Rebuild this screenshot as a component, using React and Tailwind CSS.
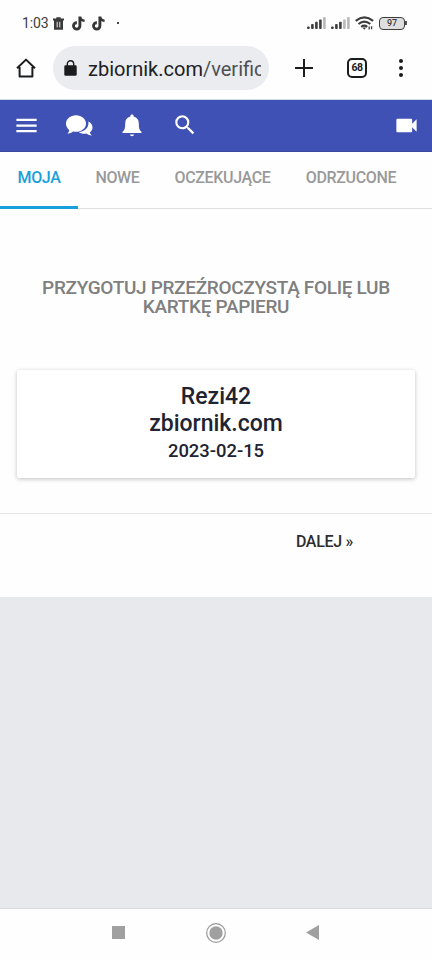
import React from "react"
import { MdMenu, MdSearch, MdVideocam } from "react-icons/md"

const tabs = [
  { label: "MOJA", active: true, box: "w-[78px]" },
  { label: "NOWE", active: false, box: "w-[79px]" },
  { label: "OCZEKUJĄCE", active: false, box: "w-[131px]" },
  { label: "ODRZUCONE", active: false, box: "w-[126px]" },
]

const TrashIcon = () => (
  <svg viewBox="0 0 11 13" className="w-[11px] h-[13px]" fill="#3b3b3b">
    <path d="M0 1.5h3.3V.3h4.4v1.2H11v1.9H0zM1 3.2h9v9.5H1z" />
    <path d="M4.200 4.800v5.600M6.800 4.800v5.600" stroke="#fff" strokeWidth="0.900" />
  </svg>
)

const NoteIcon = () => (
  <svg viewBox="0 0 13 15" className="w-[13px] h-[15px]" fill="none" stroke="#363636">
    <path d="M7.900.6v9A3.200 3.200 0 1 1 4.900 6.700" strokeWidth="2.900" />
    <path d="M8 1.100c.3 2.400 2 3.500 4.600 3.600" strokeWidth="2.600" />
  </svg>
)

const Signal = ({ bars }) => (
  <svg viewBox="0 0 19 12" className="w-[19px] h-[12px]">
    {[2.6, 5, 7.3, 9.5, 12].map((h, i) => (
      <rect key={h} x={i * 4 + 0.1} y={12 - h} width="2.6" height={h} rx="0.8" fill={i < bars ? "#3d3d3d" : "#b8b8b8"} />
    ))}
  </svg>
)

const WifiIcon = () => (
  <svg viewBox="0 0 19 14" className="w-[19px] h-[14px]" fill="none" stroke="#3d3d3d" strokeWidth="2.200">
    <path d="M.7 4.800q8.700-6.800 17.400 0M3.500 8q5.900-4.700 11.800 0M6.200 10.800q3.200-2.400 6 0" />
    <path d="M7.400 11.400h3.800l-1.900 2.400z" fill="#3d3d3d" stroke="none" />
    <path d="M14.200 10.600v3M16.600 10.300v3" strokeWidth="1.300" />
  </svg>
)

const StatusBar = () => (
  <div className="h-[46px] flex items-center pl-[22px] pr-[25px] text-[#3b3b3b]">
    <span className="w-[31px] text-[14px] tracking-[-0.1px]">1:03</span>
    <TrashIcon />
    <div className="flex gap-[7px] ml-[8px]">
      <NoteIcon />
      <NoteIcon />
    </div>
    <span className="size-[2px] ml-[12px] bg-[#444]" />
    <div className="ml-auto flex items-center">
      <Signal bars={4} />
      <div className="ml-[5px]">
        <Signal bars={3} />
      </div>
      <div className="ml-[5px]">
        <WifiIcon />
      </div>
      <div className="ml-[5px] w-[26px] h-[13px] border-[1.5px] border-[#3d3d3d] rounded-[4px] bg-[#dedede] flex items-center justify-center text-[9px] leading-none font-medium">
        97
      </div>
      <span className="w-[2px] h-[4px] bg-[#555]" />
    </div>
  </div>
)

const BrowserBar = () => (
  <div className="h-[54px] flex items-start border-b border-[#cfdaf0]">
    <svg viewBox="0 0 20 20" className="w-[20px] h-[20px] ml-[16px] mt-[12px]" fill="none" stroke="#1b1c1e" strokeWidth="2">
      <path d="M1 10.3 10 1.6l9 8.7M3.6 9v9.6h12.8V9" strokeLinejoin="round" />
    </svg>
    <div className="ml-[17px] w-[216px] h-[44px] rounded-full bg-[#ebecf0] flex items-center pl-[11px]">
      <svg viewBox="0 0 13 16" className="w-[13px] h-[16px] shrink-0" fill="#1b1c1e">
        <rect x="0.300" y="5.300" width="12.400" height="10.500" rx="1.400" />
        <path d="M3.300 6V4a3.200 3.200 0 0 1 6.400 0v2" fill="none" stroke="#1b1c1e" strokeWidth="1.400" />
      </svg>
      <div className="ml-[11px] w-[173px] overflow-hidden whitespace-nowrap text-[20px] leading-[26px] pt-[1px] text-[#202124]">
        zbiornik.com<span className="text-[#4d5055]">/verification</span>
      </div>
    </div>
    <svg viewBox="0 0 18 18" className="w-[18px] h-[18px] ml-[26px] mt-[13px]" stroke="#1b1c1e" strokeWidth="2">
      <path d="M0 9h18M9 0v18" />
    </svg>
    <div className="ml-[34px] mt-[12px] w-[20px] h-[20px] border-2 border-[#1b1c1e] rounded-[5px] flex items-center justify-center text-[10.5px] tracking-[-0.4px] leading-none font-bold text-[#1b1c1e]">
      68
    </div>
    <div className="ml-[32px] mt-[13px] flex flex-col gap-[3px]">
      <span className="size-[4px] rounded-full bg-[#1b1c1e]" />
      <span className="size-[4px] rounded-full bg-[#1b1c1e]" />
      <span className="size-[4px] rounded-full bg-[#1b1c1e]" />
    </div>
  </div>
)

const NavBar = () => (
  <div className="h-[52px] bg-[#3f51b5] border-b border-[#3b479f] flex items-center pb-[1px] text-white">
    <MdMenu className="size-[27px] ml-[13px]" />
    <svg viewBox="0 0 27 21" className="w-[27px] h-[21px] ml-[26px]" fill="#fff">
      <path d="M10 .2c5.600 0 10 3.700 10 8.300s-4.400 8.300-10 8.300c-1 0-2-.1-3-.4-1.600 1.400-3.400 2.200-5.600 2.200 1-.9 1.700-2 1.800-3.600C1.200 13.400 0 11.100 0 8.500 0 3.900 4.400.2 10 .2z" />
      <path d="M22.300 6.600c2.600 1.100 4.200 3.300 4.200 5.800 0 2-1 3.700-2.600 4.900.2 1.500 1 2.400 2 3.200-2.300 0-4-.7-5.400-2-2.700.6-5.500.2-7.600-1.200 5.900-.7 10.600-4.900 9.400-10.700z" />
    </svg>
    <svg viewBox="0 0 20 23" className="w-[20px] h-[23px] ml-[29px]" fill="#fff">
      <path d="M10 .5c1 0 1.600.6 1.600 1.500v.6c3.500.8 5.200 3.300 5.200 6.800 0 4.300.5 6.900 2.700 8.400v1.300H.5v-1.300c2.200-1.500 2.700-4.100 2.700-8.400 0-3.500 1.700-6 5.200-6.800V2c0-.9.6-1.500 1.600-1.500zM8 20.500h4a2 1.800 0 0 1-4 0z" />
    </svg>
    <MdSearch className="size-[26px] ml-[30px]" />
    <MdVideocam className="size-[27px] ml-auto mr-[12px]" />
  </div>
)

const App = () => {
  return (
    <div className="w-[432px] h-[960px] bg-[#fefefe] flex flex-col overflow-hidden font-['Roboto',sans-serif]">
      <StatusBar />
      <BrowserBar />
      <NavBar />

      {/* Tabs */}
      <div className="h-[57px] flex border-b border-[#dfdfdf]">
        {tabs.map((tab) => (
          <div key={tab.label} className={`${tab.box} h-[57px] flex flex-col justify-between items-center`}>
            <span className={`mt-[14px] text-[16px] leading-[24px] tracking-[-0.36px] font-medium ${tab.active ? "text-[#18a0dc]" : "text-[#999]"}`}>
              {tab.label}
            </span>
            {tab.active && <span className="w-full h-[3px] bg-[#18a0dc]" />}
          </div>
        ))}
      </div>

      {/* Verification step */}
      <div className="h-[305px] border-b border-[#e6e6e6] px-[17px] pt-[70px]">
        <h1 className="text-center text-[19px] leading-[18.5px] tracking-[-0.32px] font-medium text-[#7f7f7f]">
          PRZYGOTUJ PRZEŹROCZYSTĄ FOLIĘ LUB
          <br />
          KARTKĘ PAPIERU
        </h1>
        <div className="mt-[53.5px] h-[108px] bg-white rounded-[2px] shadow-[0_1px_4px_rgba(0,0,0,0.25)] pt-[13px] text-center font-medium text-[#212332]">
          <p className="text-[23px] leading-[27px]">Rezi42</p>
          <p className="text-[23px] leading-[27px]">zbiornik.com</p>
          <p className="text-[18.4px] leading-[27px]">2023-02-15</p>
        </div>
      </div>
      <div className="h-[83px] flex justify-end pr-[79px] pt-[16px]">
        <button className="h-[24px] text-[16px] leading-[24px] tracking-[-0.3px] font-medium text-[#2d2d2d]">DALEJ »</button>
      </div>

      <div className="h-[312px] bg-[#e8e9ed] border-b border-[#dadbdd]" />

      {/* System navigation */}
      <div className="h-[51px] flex items-start">
        <span className="size-[13px] bg-[#a0a0a0] ml-[112px] mt-[17px]" />
        <svg viewBox="0 0 20 20" className="w-[20px] h-[20px] ml-[81px] mt-[14px]">
          <circle cx="10" cy="10" r="9.300" fill="none" stroke="#999" strokeWidth="1.200" />
          <circle cx="10" cy="10" r="6.700" fill="#a0a0a0" />
        </svg>
        <svg viewBox="0 0 13 15" className="w-[13px] h-[15px] ml-[80px] mt-[16px]">
          <path d="M0 7.500 13 0v15z" fill="#a0a0a0" />
        </svg>
      </div>
    </div>
  )
}

export default App
